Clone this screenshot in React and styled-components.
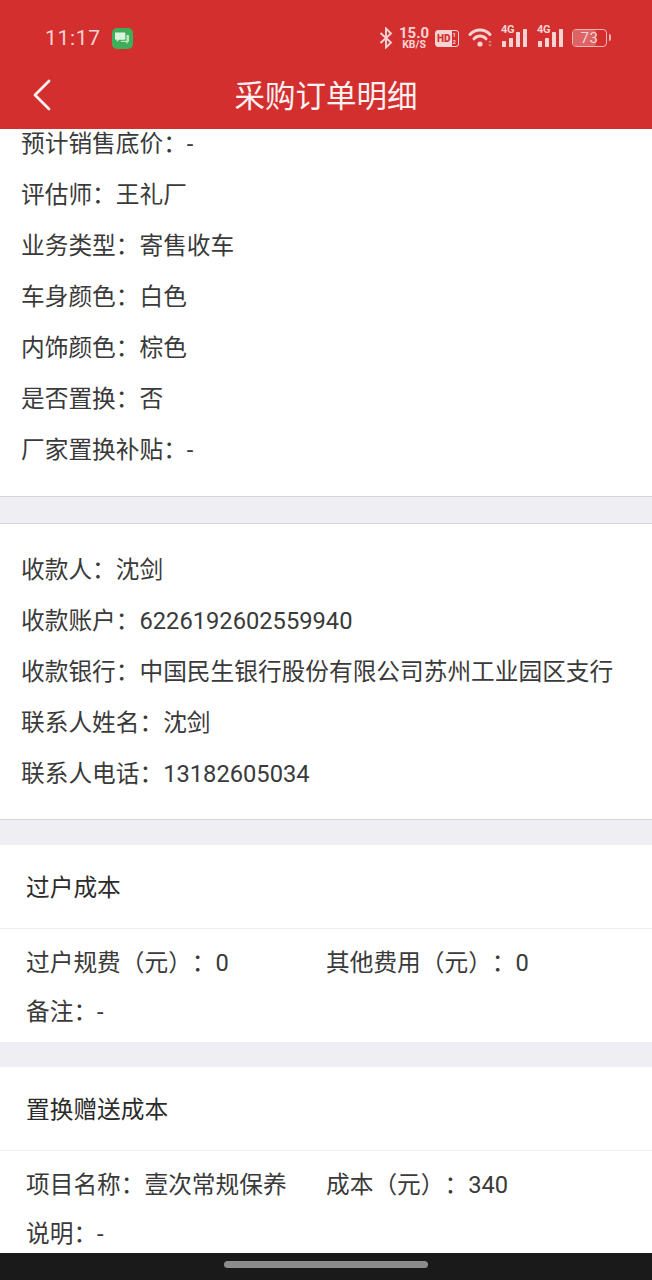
import React from "react";
import styled, { createGlobalStyle } from "styled-components";

const GlobalStyle = createGlobalStyle`
    html, body {
        margin: 0;
        padding: 0;
        background: #ffffff;
    }
    * {
        box-sizing: border-box;
    }
`;

const orderRows = [
    ["预计销售底价：", "-"],
    ["评估师：", "王礼厂"],
    ["业务类型：", "寄售收车"],
    ["车身颜色：", "白色"],
    ["内饰颜色：", "棕色"],
    ["是否置换：", "否"],
    ["厂家置换补贴：", "-"],
];

const payeeRows = [
    ["收款人：", "沈剑"],
    ["收款账户：", "6226192602559940"],
    ["收款银行：", "中国民生银行股份有限公司苏州工业园区支行"],
    ["联系人姓名：", "沈剑"],
    ["联系人电话：", "13182605034"],
];

const SignalIcon = () => (
    <SignalWrap>
        <SignalLabel>4G</SignalLabel>
        <svg width={26} height={20} viewBox="0 0 26 20">
            <rect x={1} y={13} width={4} height={6} rx={0.6} fill="#f7d3d3" />
            <rect x={8} y={10} width={4} height={9} rx={0.6} fill="#f7d3d3" />
            <rect x={15} y={4} width={4} height={15} rx={0.6} fill="#f7d3d3" />
            <rect x={22} y={1} width={4} height={18} rx={0.6} fill="#f7d3d3" />
        </svg>
    </SignalWrap>
);

const StatusIcons = () => (
    <StatusRight>
        <svg width={14} height={22} viewBox="0 0 14 22" fill="none" stroke="#f7d3d3" strokeWidth={1.9}>
            <path d="M1.5 6 L12 15.5 L7 20.5 V1.5 L12 6.5 L1.5 16" />
        </svg>
        <Speed>
            <SpeedValue>15.0</SpeedValue>
            <SpeedUnit>KB/S</SpeedUnit>
        </Speed>
        <HdBadge>
            <HdLetters>HD</HdLetters>
            <HdSub>1<br />2</HdSub>
        </HdBadge>
        <WifiWrap>
            <svg width={26} height={22} viewBox="0 0 26 22" fill="none" stroke="#f7d3d3" strokeWidth={3} strokeLinecap="round">
                <path d="M2 7.5 C7.5 1.5 16.5 1.5 22 7.5" />
                <path d="M6 11.8 C9.5 8 14.5 8 18 11.8" />
                <circle cx={12} cy={17} r={2.6} fill="#f7d3d3" stroke="none" />
                <path d="M20 15.5 L22 13.5 L24 15.5 Z" fill="#e58a8a" stroke="none" />
                <path d="M20 17.5 L22 19.5 L24 17.5 Z" fill="#e58a8a" stroke="none" />
            </svg>
        </WifiWrap>
        <SignalIcon />
        <SignalIcon />
        <Battery>
            <BatteryFill />
            <BatteryText>73</BatteryText>
            <BatteryCap />
        </Battery>
    </StatusRight>
);

const App = () => {
    return (
        <Page>
            <GlobalStyle />
            <Header>
                <StatusBar>
                    <Time>11:17</Time>
                    <ChatBadge>
                        <svg width={16} height={15} viewBox="0 0 16 15">
                            <path d="M1 1.5 h9.5 a0.8 0.8 0 0 1 0.8 0.8 v5.6 a0.8 0.8 0 0 1 -0.8 0.8 H5 L2.8 11 V8.7 H1.8 a0.8 0.8 0 0 1 -0.8 -0.8 Z" fill="#d9f3dd" />
                            <path d="M12.4 4 h1.8 a0.8 0.8 0 0 1 0.8 0.8 v5.4 a0.8 0.8 0 0 1 -0.8 0.8 h-0.7 v2 l-2.2 -2 H6.4 l1 -1.2 h5 Z" fill="#b7e6c0" />
                        </svg>
                    </ChatBadge>
                    <StatusIcons />
                </StatusBar>
                <NavBar>
                    <BackButton>
                        <svg width={20} height={34} viewBox="0 0 20 34" fill="none" stroke="#fdf1f1" strokeWidth={2.8} strokeLinecap="round" strokeLinejoin="round">
                            <path d="M17 2 L3 16 L17 30" />
                        </svg>
                    </BackButton>
                    <NavTitle>采购订单明细</NavTitle>
                </NavBar>
            </Header>

            <Content>
                <ScrollBody>
                    <InfoPanel $pad="0 0 20px" $gap="26px">
                        {orderRows.map(([label, value]) => (
                            <InfoRow key={label}>{label}{value}</InfoRow>
                        ))}
                    </InfoPanel>
                    <InfoPanel $pad="21px 0 19px" $gap="25px" $ruled>
                        {payeeRows.map(([label, value]) => (
                            <InfoRow key={label}>{label}{value}</InfoRow>
                        ))}
                    </InfoPanel>

                    <CostCard>
                        <CardTitle>过户成本</CardTitle>
                        <CardBody>
                            <CostGrid>
                                <CostCell>过户规费（元）：0</CostCell>
                                <CostCell>其他费用（元）：0</CostCell>
                            </CostGrid>
                            <CostCell>备注：-</CostCell>
                        </CardBody>
                    </CostCard>

                    <CostCard>
                        <CardTitle>置换赠送成本</CardTitle>
                        <CardBody>
                            <CostGrid>
                                <CostCell>项目名称：壹次常规保养</CostCell>
                                <CostCell>成本（元）：340</CostCell>
                            </CostGrid>
                            <CostCell>说明：-</CostCell>
                        </CardBody>
                    </CostCard>
                </ScrollBody>
            </Content>

            <NavigationBar>
                <HomePill />
            </NavigationBar>
        </Page>
    );
};

export default App;

const Page = styled.div`
    display: flex;
    flex-direction: column;
    width: 652px;
    height: 1280px;
    overflow: hidden;
    background-color: #ffffff;
    font-family: "Roboto", "Noto Sans CJK SC", sans-serif;
    text-spacing-trim: space-all;
    color: #3a3a3a;
`;

const Header = styled.header`
    flex: none;
    height: 129px;
    background-color: #d32f2f;
`;

const StatusBar = styled.div`
    display: flex;
    align-items: center;
    height: 64px;
    padding: 12px 45px 0 45px;
`;

const Time = styled.span`
    font-family: "Roboto", sans-serif;
    font-size: 21px;
    letter-spacing: 0.7px;
    color: #f7d3d3;
`;

const ChatBadge = styled.span`
    display: flex;
    align-items: center;
    justify-content: center;
    width: 21px;
    height: 21px;
    margin-left: 11px;
    border-radius: 5px;
    background-color: #3fae5a;
`;

const StatusRight = styled.div`
    display: flex;
    align-items: center;
    margin-left: auto;
`;

const Speed = styled.div`
    display: flex;
    flex-direction: column;
    align-items: center;
    width: 28px;
    margin-left: 7px;
    font-family: "Roboto", sans-serif;
    font-weight: 700;
    color: #f7d3d3;
`;

const SpeedValue = styled.span`
    font-size: 15px;
    line-height: 13px;
`;

const SpeedUnit = styled.span`
    font-size: 10.5px;
    line-height: 10px;
`;

const HdBadge = styled.div`
    display: flex;
    align-items: center;
    width: 24px;
    height: 17px;
    margin-left: 7px;
    border: 1.5px solid #f7d3d3;
    border-radius: 3px;
    font-family: "Roboto", sans-serif;
    color: #f7d3d3;
`;

const HdLetters = styled.span`
    display: flex;
    align-items: center;
    height: 100%;
    padding: 0 1px;
    background-color: #f7d3d3;
    font-size: 10px;
    font-weight: 900;
    color: #d32f2f;
`;

const HdSub = styled.span`
    margin-left: 1px;
    font-size: 6px;
    font-weight: 700;
    line-height: 7px;
`;

const WifiWrap = styled.div`
    display: flex;
    margin-left: 9px;
    margin-right: -3px;
`;

const SignalWrap = styled.div`
    position: relative;
    display: flex;
    width: 26px;
    margin-left: 10px;
`;

const SignalLabel = styled.span`
    position: absolute;
    top: -4px;
    left: 0;
    font-family: "Roboto", sans-serif;
    font-size: 11px;
    font-weight: 700;
    line-height: 12px;
    letter-spacing: -0.3px;
    color: #f7d3d3;
    background-color: #d32f2f;
    padding-right: 1px;
`;

const Battery = styled.div`
    position: relative;
    width: 35px;
    height: 18px;
    margin-left: 9px;
    border: 1.5px solid #f2b5b5;
    border-radius: 4px;
`;

const BatteryFill = styled.div`
    width: 70%;
    height: 100%;
    border-radius: 2px;
    background-color: #dd6464;
`;

const BatteryText = styled.span`
    position: absolute;
    inset: 0;
    display: flex;
    align-items: center;
    justify-content: center;
    font-family: "Roboto", sans-serif;
    font-size: 15px;
    letter-spacing: 0.6px;
    color: #f7d3d3;
`;

const BatteryCap = styled.span`
    position: absolute;
    top: 4px;
    right: -5px;
    width: 2px;
    height: 7px;
    border-radius: 0 2px 2px 0;
    background-color: #f2b5b5;
`;

const NavBar = styled.div`
    position: relative;
    display: flex;
    align-items: center;
    justify-content: center;
    height: 60px;
`;

const BackButton = styled.div`
    position: absolute;
    top: 15px;
    left: 32px;
    display: flex;
`;

const NavTitle = styled.h1`
    margin: 0;
    font-size: 30.5px;
    font-weight: 400;
    color: #fdf1f1;
`;

const Content = styled.main`
    flex: 1;
    min-height: 0;
    overflow: hidden;
    background-color: #eeeef3;
`;

const ScrollBody = styled.div`
    margin-top: -10px;
`;

const InfoPanel = styled.section`
    padding: ${(props) => props.$pad};
    margin-bottom: ${(props) => props.$gap};
    background-color: #ffffff;
    border-bottom: 1px solid #d6d6da;
    border-top: ${(props) => (props.$ruled ? "1px solid #d6d6da" : "none")};
`;

const InfoRow = styled.div`
    height: 51px;
    padding-left: 21px;
    font-size: 23.7px;
    line-height: 51px;
    white-space: nowrap;
`;

const CostCard = styled.section`
    margin-bottom: 25px;
    background-color: #ffffff;
`;

const CardTitle = styled.h2`
    height: 84px;
    margin: 0;
    padding-left: 26px;
    border-bottom: 1px solid #eeeeee;
    font-size: 23.7px;
    font-weight: 400;
    line-height: 86px;
    color: #2b2b2b;
`;

const CardBody = styled.div`
    padding: 9px 26px 6px;
`;

const CostGrid = styled.div`
    display: grid;
    grid-template-columns: 300px 300px;
`;

const CostCell = styled.div`
    height: 49px;
    font-size: 23.7px;
    line-height: 51px;
    white-space: nowrap;
`;

const NavigationBar = styled.div`
    display: flex;
    flex: none;
    justify-content: center;
    height: 27px;
    padding-top: 8px;
    background-color: #1a1a1a;
`;

const HomePill = styled.div`
    width: 204px;
    height: 7px;
    border-radius: 4px;
    background-color: #8b8b8b;
`;
